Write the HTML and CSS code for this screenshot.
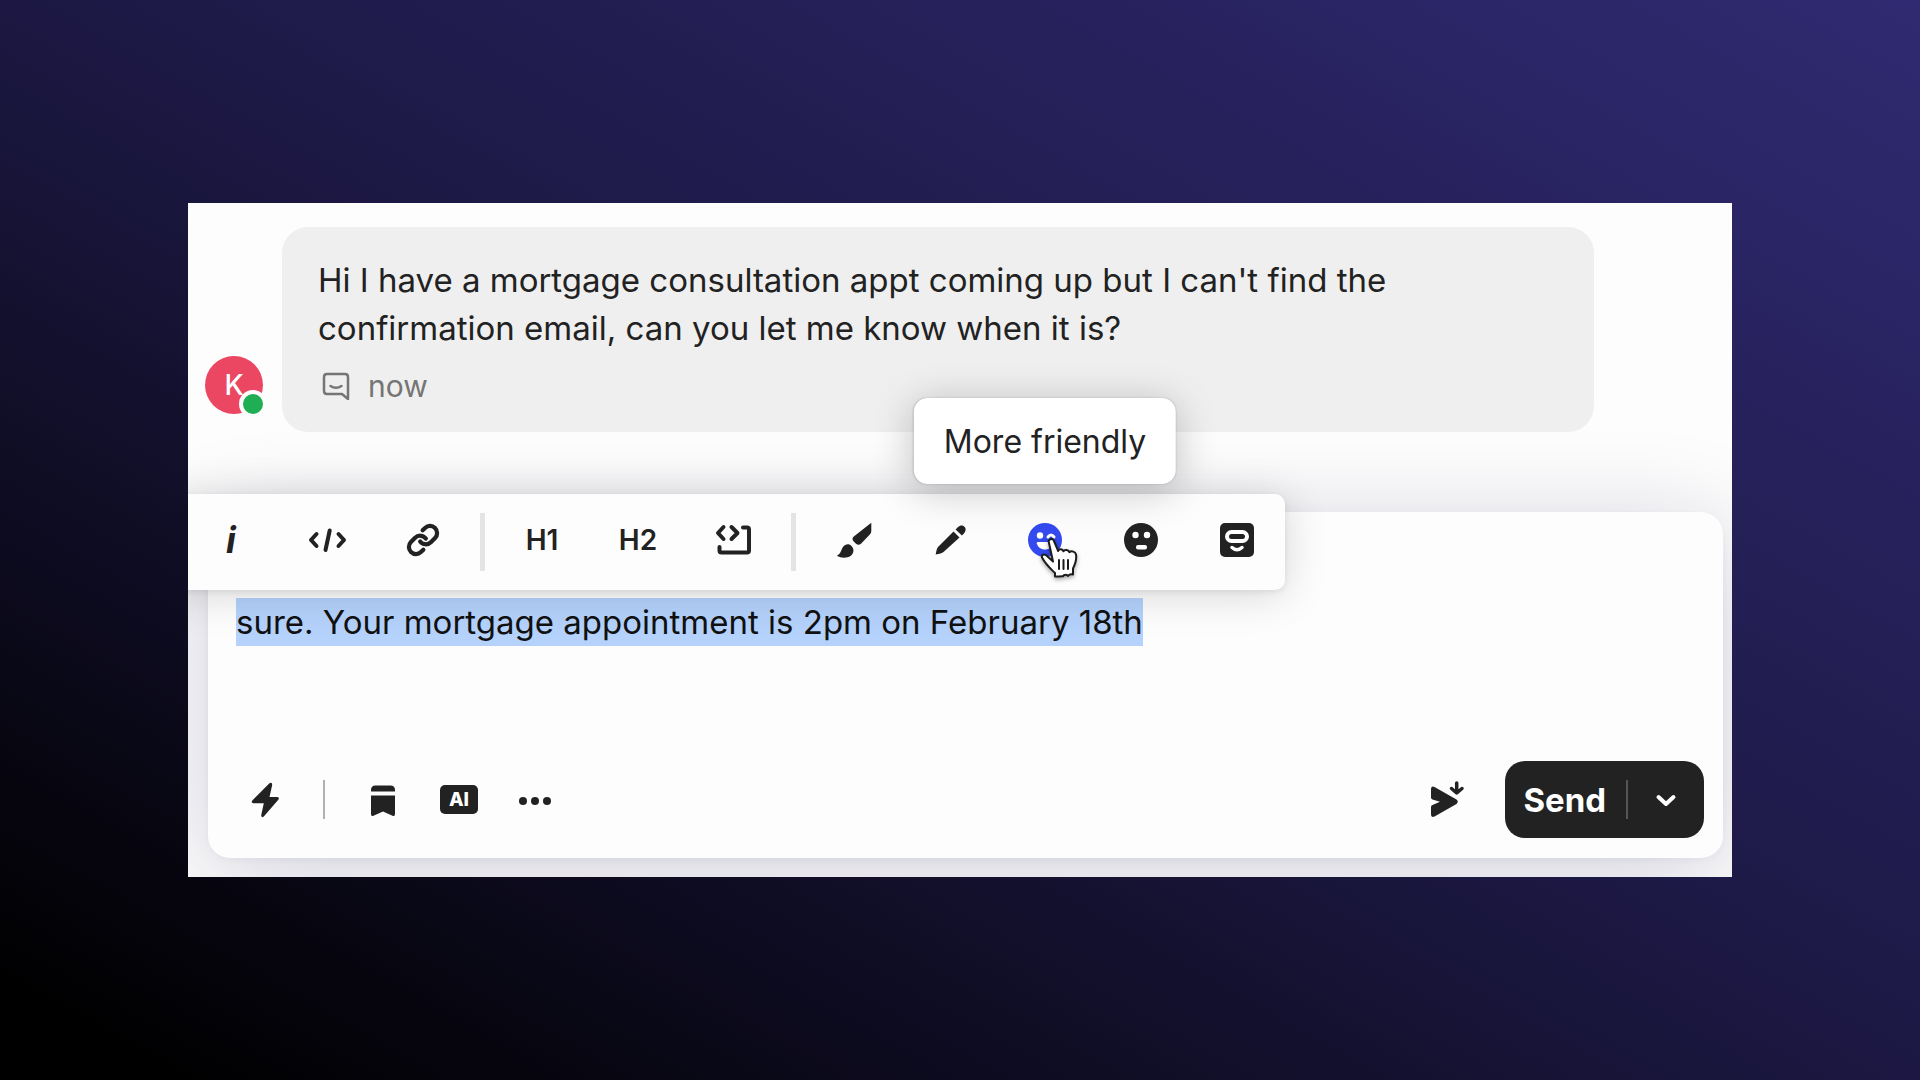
FILE: index.html
```html
<!DOCTYPE html>
<html lang="en">
<head>
  <meta charset="UTF-8" />
  <meta name="viewport" content="width=device-width, initial-scale=1" />
  <title>Inbox</title>
  <link rel="stylesheet" href="styles.css">
</head>
<body>
  <main class="panel">
    <article class="message">
      <div class="avatar">K<span class="status"></span></div>
      <div class="bubble">
        <p>Hi I have a mortgage consultation appt coming up but I can't find the<br>confirmation email, can you let me know when it is?</p>
        <div class="meta">
          <svg width="28" height="28" viewBox="0 0 28 28" fill="none" stroke="currentColor" stroke-width="2.500" stroke-linecap="round" stroke-linejoin="round">
            <path d="M5 2h18q3 0 3 3v22l-6-5H5q-3 0-3-3V5q0-3 3-3z"/>
            <path d="M8.500 14q5.500 3.500 11 0"/>
          </svg>
          <time>now</time>
        </div>
      </div>
    </article>

    <section class="composer">
      <div class="toolbar">
        <button class="tool italic" aria-label="Italic">i</button>
        <button class="tool" aria-label="Code">
          <svg class="icon line" viewBox="0 0 40 40"><path d="M9.500 14L4 20l5.500 6M31.500 14l5.500 6-5.500 6M22.700 10.500L18.500 30"/></svg>
        </button>
        <button class="tool" aria-label="Link">
          <svg class="icon link" viewBox="0 0 24 24"><path d="M10 13a5 5 0 0 0 7.540.540l3-3a5 5 0 0 0-7.070-7.070l-1.720 1.710M14 11a5 5 0 0 0-7.540-.540l-3 3a5 5 0 0 0 7.070 7.070l1.710-1.710"/></svg>
        </button>
        <span class="divider"></span>
        <button class="tool" aria-label="Heading 1">H1</button>
        <button class="tool" aria-label="Heading 2">H2</button>
        <button class="tool" aria-label="Code block">
          <svg class="icon line" viewBox="0 0 40 40"><path d="M9.500 7l-5.500 6 5.500 6M17.500 7l6 6-6 6M29 7.500h4q2 0 2 2v21q0 2-2 2H7.500q-2 0-2-2v-3.500"/></svg>
        </button>
        <span class="divider"></span>
        <button class="tool" aria-label="Rephrase">
          <svg class="icon" viewBox="0 0 40 40"><path d="M38.300 2.800V11q0 2-1.500 3.500L28 23.800q-2.500 2-5 0l-2.500-2.500q-2-2.300 0-4.500z"/><path d="M3.700 35.800C8 34 8 29.500 10 27c2.500-3.500 6.500-3.200 8.500-1 3 3 2.500 7.500-1 10-3.500 2.300-9.500 2.300-13.800-.2z"/></svg>
        </button>
        <button class="tool" aria-label="Edit">
          <svg class="icon" viewBox="0 0 40 40"><path d="M24.500 11.500l6 6L14.500 32q-2 1.500-7.800 2.500Q7.500 28.800 9 27z"/><path d="M26.600 9.500l2.200-2.200c2.500-2.500 5-2 6.600-.5s1.900 4.100-.5 6.600l-2 2z"/></svg>
        </button>
        <button class="tool friendly" aria-label="More friendly" aria-describedby="tip">
          <svg class="icon" viewBox="0 0 40 40">
            <circle cx="20" cy="20" r="17"/>
            <circle cx="15" cy="15.500" r="3.200" fill="#fff"/>
            <path d="M23 17q3-4 6 0" fill="none" stroke="#fff" stroke-width="3" stroke-linecap="round"/>
            <path d="M13 22h14.500q1 0 .8 1.200C27.500 27 24 29.500 20 29.500s-7.500-2.500-8.200-6.300Q11.800 22 13 22z" fill="#fff"/>
          </svg>
          <span class="tooltip" id="tip" role="tooltip">More friendly</span>
          <svg class="cursor" width="40" height="44" viewBox="0 0 40 44" fill="#fff" stroke="#1c1c1c" stroke-width="2" stroke-linejoin="round" stroke-linecap="round">
            <path d="M9 6C7.500 2 12.500.5 14 4l4.200 10c.8-2.500 4.300-2 5.300.3 1-2 4.800-1.600 6 .9 2-1.700 5.800-.7 6.500 2.300 1 5.500-1 10-3 14v6c-2.500-.8-4 .2-5 1.500-1-1.700-4-1.700-5 .3-3 .2-7 .5-8 .2v-3.500C11 32 6 28 2 20.500c-.8-3 2.500-4 5-1.500l6 5.500z"/>
            <path d="M19 23v9M23.500 23v9M28 23v9" fill="none"/>
          </svg>
        </button>
        <button class="tool" aria-label="More formal">
          <svg class="icon" viewBox="0 0 40 40">
            <circle cx="20" cy="20" r="17"/>
            <circle cx="14.500" cy="15" r="3.200" fill="#fff"/>
            <circle cx="26" cy="15" r="3.200" fill="#fff"/>
            <rect x="15" y="25" width="11" height="4.500" rx="2" fill="#fff"/>
          </svg>
        </button>
        <button class="tool" aria-label="Assistant">
          <svg class="icon" viewBox="0 0 40 40">
            <rect x="3" y="3" width="34" height="34" rx="5"/>
            <rect x="10" y="12" width="20" height="9" rx="4.500" fill="none" stroke="#fff" stroke-width="4"/>
            <path d="M15 27.500q5 4.500 10 0" fill="none" stroke="#fff" stroke-width="3.500" stroke-linecap="round"/>
          </svg>
        </button>
      </div>

      <textarea class="editor" rows="3" aria-label="Reply" spellcheck="false">sure. Your mortgage appointment is 2pm on February 18th</textarea>

      <div class="actions">
        <button class="action" aria-label="Shortcuts">
          <svg class="icon" viewBox="0 0 40 40"><path d="M24.200 3.500q3-2 3 1.500l-2.700 12h7.800q2.500.5 1 2.800L18.800 36.500q-2.600 1.700-2.600-1.200l2.600-12.100H8.500q-3-.4-1-3z"/></svg>
        </button>
        <span class="rule"></span>
        <button class="action" aria-label="Saved replies">
          <svg class="icon" viewBox="0 0 40 40"><path d="M8 11.500V10q0-4.500 4.500-4.500h15Q32 5.500 32 10v1.500zM8 15.500h24V34q0 3-3 1.500l-9-4-9 4Q8 37 8 34z"/></svg>
        </button>
        <button class="action" aria-label="AI assist"><span class="ai">AI</span></button>
        <button class="action" aria-label="More">
          <svg class="icon" viewBox="0 0 40 40"><circle cx="8" cy="21" r="4"/><circle cx="20" cy="21" r="4"/><circle cx="32" cy="21" r="4"/></svg>
        </button>
        <button class="action later" aria-label="Send later">
          <svg class="icon" viewBox="0 0 40 40">
            <path d="M4 9.500q0-4 3.500-2.500l22 12.500q2.500 2 0 4.500l-22 12.500Q4 38 4 34.500V27q0-1.500 1.500-2l7.500-3.200-7.500-2.300Q4 19 4 17.500z"/>
            <path d="M29.700 3v10M24.500 8.500l5.200 4.500 5.300-4.500" fill="none" stroke="#fff" stroke-width="8"/>
            <path d="M29.700 3v10M24.500 8.500l5.200 4.500 5.300-4.500" fill="none" stroke="currentColor" stroke-width="3.500" stroke-linecap="round" stroke-linejoin="round"/>
          </svg>
        </button>
        <div class="send">
          <button class="send-main">Send</button>
          <button class="send-menu" aria-label="Send options">
            <svg width="24" height="16" viewBox="0 0 24 16" fill="none" stroke="#fff" stroke-width="4" stroke-linecap="round" stroke-linejoin="round"><path d="M4.500 5l7.500 7 7.500-7"/></svg>
          </button>
        </div>
      </div>
    </section>
  </main>

  <script>
    const editor = document.querySelector('.editor');
    editor.focus();
    editor.select();
  </script>
</body>
</html>
```

FILE: styles.css
```css
* {
  box-sizing: border-box;
}
body {
  margin: 0;
  min-height: 100vh;
  padding: 0 188px;
  display: flex;
  align-items: center;
  background: linear-gradient(to top right, #000 4%, #1c1843 50%, #302a72);
  font-family: Inter, 'Liberation Sans', sans-serif;
  font-size: 33px;
  line-height: 48px;
  color: #222;
}
button {
  margin: 0;
  padding: 0;
  border: none;
  background: none;
  font: inherit;
  color: inherit;
  cursor: pointer;
}
.panel {
  flex: 1;
  padding: 24px 9px 19px 17px;
  background: #fdfdfd;
  overflow: hidden;
}

/* incoming message */
.message {
  display: flex;
  align-items: flex-end;
  gap: 19px;
  margin-right: 129px;
}
.avatar {
  position: relative;
  width: 58px;
  height: 58px;
  margin-bottom: 18px;
  border-radius: 50%;
  background: #eb4763;
  color: #fff;
  font-size: 28px;
  font-weight: 500;
  line-height: 58px;
  text-align: center;
}
.status {
  position: absolute;
  right: -4px;
  bottom: -4px;
  width: 28px;
  height: 28px;
  border: 4px solid #fdfdfd;
  border-radius: 50%;
  background: #1fae54;
}
.bubble {
  flex: 1;
  padding: 29px 36px 22px;
  border-radius: 26px;
  background: #efefef;
}
.bubble p {
  margin: 0 0 10px;
}
.meta {
  display: flex;
  align-items: center;
  gap: 18px;
  padding-left: 4px;
  color: #757575;
  font-size: 30px;
}

/* reply box */
.composer {
  position: relative;
  margin: 80px 0 0 3px;
  padding: 86px 19px 20px;
  border-radius: 22px;
  background: #fdfdfd;
  box-shadow: 0 2px 6px rgba(20, 20, 70, 0.04), 0 16px 100px rgba(20, 20, 80, 0.2);
}
.toolbar {
  position: absolute;
  top: -18px;
  left: -41px;
  height: 96px;
  padding: 0 0 4px 16px;
  display: flex;
  align-items: center;
  border-radius: 10px;
  background: #fdfdfd;
  box-shadow: 0 2px 6px rgba(0, 0, 0, 0.08), 0 4px 44px rgba(0, 0, 0, 0.16);
}
.tool {
  position: relative;
  width: 96px;
  height: 92px;
  display: flex;
  align-items: center;
  justify-content: center;
  font-size: 28px;
  font-weight: 600;
}
.italic {
  font-size: 36px;
  font-style: italic;
  font-weight: 700;
}
.friendly .icon {
  color: #3449ee;
}
.divider {
  width: 5px;
  height: 58px;
  margin: 4px 9px 0;
  background: #e4e4e4;
}
.icon {
  display: block;
  width: 40px;
  height: 40px;
  fill: currentColor;
}
.line,
.link {
  fill: none;
  stroke: currentColor;
  stroke-width: 4;
  stroke-linecap: round;
  stroke-linejoin: round;
}
.link {
  width: 34px;
  height: 34px;
  stroke-width: 3;
}
.tooltip {
  position: absolute;
  bottom: 102px;
  left: 50%;
  transform: translateX(-50%);
  padding: 20px 30px 18px;
  border-radius: 14px;
  background: #fff;
  box-shadow: 0 0 2px rgba(0, 0, 0, 0.2), 0 6px 40px rgba(0, 0, 0, 0.24);
  font-size: 32px;
  font-weight: 400;
  white-space: nowrap;
}
.cursor {
  position: absolute;
  top: 43px;
  left: 43px;
  filter: drop-shadow(0 2px 2px rgba(0, 0, 0, 0.35));
}
.editor {
  display: block;
  width: 100%;
  margin: 0 0 19px;
  padding: 0 9px;
  border: none;
  outline: none;
  resize: none;
  background: none;
  font: inherit;
  color: #111;
  caret-color: transparent;
}
.editor::selection {
  background: #b4d2fc;
  color: #111;
}

/* bottom row */
.actions {
  display: flex;
  align-items: center;
}
.action {
  width: 76px;
  height: 77px;
  display: flex;
  align-items: center;
  justify-content: center;
}
.rule {
  width: 2px;
  height: 39px;
  margin: 0 20px;
  background: #b0b0b0;
}
.ai {
  width: 38px;
  border-radius: 5px;
  background: #222;
  color: #fff;
  font-size: 19px;
  font-weight: 800;
  line-height: 29px;
}
.later {
  margin-left: auto;
  margin-right: 20px;
}
.send {
  display: flex;
  align-items: center;
  border-radius: 20px;
  background: #222;
  color: #fff;
}
.send-main {
  height: 77px;
  padding: 0 20px 0 18px;
  font-weight: 700;
}
.send-menu {
  width: 78px;
  height: 39px;
  display: flex;
  align-items: center;
  justify-content: center;
  border-left: 2px solid #555;
}
```
